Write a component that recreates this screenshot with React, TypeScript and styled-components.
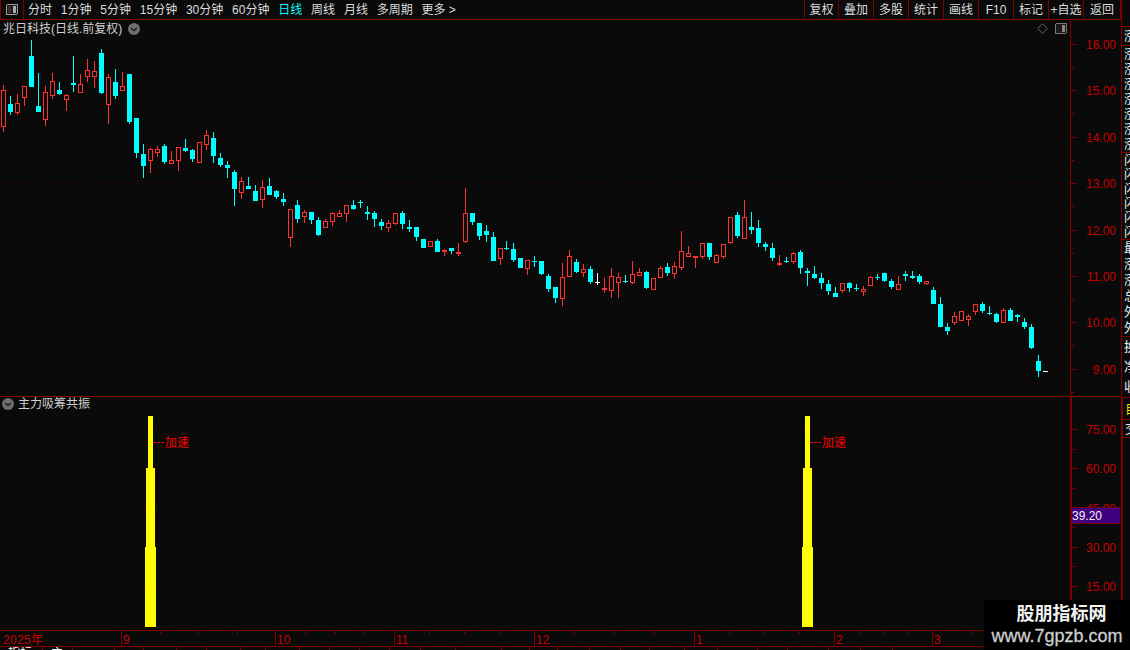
import React from "react";
import styled, { createGlobalStyle } from "styled-components";

const RED_LINE = "#800000";
const AXIS_TEXT = "#c80000";
const FONT = `"Liberation Sans", "Noto Sans CJK SC", sans-serif`;

const Global = createGlobalStyle`
  html, body { margin: 0; padding: 0; background: #0a0a0a; overflow: hidden; }
`;

const Page = styled.div`
  position: relative;
  display: flex;
  width: 1130px;
  height: 650px;
  overflow: hidden;
  background: #0a0a0a;
  color: #ddd;
  font: 12px/1 ${FONT};
`;

const MainColumn = styled.div`
  display: flex;
  flex-direction: column;
  width: 1121px;
  flex: none;
`;

const Toolbar = styled.div`
  display: flex;
  align-items: center;
  height: 19px;
  border-bottom: 1px solid ${RED_LINE};
  box-sizing: content-box;
  flex: none;
`;

const LayoutCell = styled.div`
  display: flex;
  align-items: center;
  justify-content: center;
  width: 22px;
  height: 19px;
  border-left: 1px solid ${RED_LINE};
  border-right: 1px solid ${RED_LINE};
  margin-right: 4px;
  flex: none;
`;

const Periods = styled.div`
  display: flex;
  align-items: center;
  gap: 8.8px;
  flex: 1;
`;

const Period = styled.span<{ $active?: boolean }>`
  color: ${(p) => (p.$active ? "#00ffff" : "#ddd")};
  white-space: nowrap;
`;

const Actions = styled.div`
  display: flex;
  height: 19px;
  border-right: 1px solid ${RED_LINE};
`;

const Action = styled.div`
  display: flex;
  align-items: center;
  justify-content: center;
  width: 34px;
  border-left: 1px solid ${RED_LINE};
  white-space: nowrap;
  color: #ddd;

  &:first-child {
    width: 33px;
  }

  &:last-child {
    width: 36px;
  }
`;

const Pane = styled.div<{ $h: number }>`
  position: relative;
  height: ${(p) => p.$h}px;
  flex: none;
  border-bottom: 1px solid ${RED_LINE};
`;

const ChartSvg = styled.svg`
  display: block;
  position: absolute;
  inset: 0;
  shape-rendering: crispEdges;
`;

const PaneTitle = styled.div`
  position: absolute;
  display: flex;
  align-items: center;
  gap: 6px;
  color: #d0d0d0;
  white-space: nowrap;
`;

const PriceTitle = styled(PaneTitle)`
  left: 3px;
  top: 3px;
`;

const IndicatorTitle = styled(PaneTitle)`
  left: 2px;
  top: 1px;
  gap: 4px;
`;

const CornerTools = styled.div`
  position: absolute;
  top: 3px;
  left: 1037px;
  display: flex;
  align-items: center;
  gap: 7px;
`;

const BottomTabs = styled.div`
  display: flex;
  height: 3px;
  overflow: hidden;
  flex: 1;
`;

const BottomTab = styled.div<{ $w: number; $cyan?: boolean }>`
  width: ${(p) => p.$w}px;
  flex: none;
  box-sizing: border-box;
  border-right: 1px solid ${RED_LINE};
  padding-left: 8px;
  color: ${(p) => (p.$cyan ? "#00ffff" : "#fff")};
  line-height: 12px;
  white-space: nowrap;
  overflow: hidden;
`;

const SideColumn = styled.div`
  display: flex;
  flex-direction: column;
  width: 9px;
  height: 650px;
  flex: none;
  overflow: hidden;
`;

const SideBlank = styled.div<{ $h: number; $wide?: boolean }>`
  height: ${(p) => p.$h}px;
  flex: none;
  box-sizing: border-box;
  border-left: ${(p) => (p.$wide ? 2 : 1)}px solid ${RED_LINE};
`;

const SideGroup = styled.div<{ $h: number; $wide?: boolean }>`
  display: flex;
  flex-direction: column;
  justify-content: space-around;
  height: ${(p) => p.$h}px;
  flex: none;
  box-sizing: border-box;
  border-top: 1px solid ${RED_LINE};
  border-left: ${(p) => (p.$wide ? 2 : 1)}px solid ${RED_LINE};
  overflow: hidden;
`;

const SideGlyph = styled.span<{ $yellow?: boolean }>`
  display: block;
  padding-left: 2px;
  width: 14px;
  font-size: 13px;
  line-height: 14px;
  color: ${(p) => (p.$yellow ? "#e0e000" : "#e8e8e8")};
`;

const Watermark = styled.div`
  position: absolute;
  left: 984px;
  top: 600px;
  width: 146px;
  height: 50px;
  background: #000;
  display: flex;
  flex-direction: column;
  align-items: center;
  padding-top: 5px;
  box-sizing: border-box;
`;

const WatermarkName = styled.div`
  font: bold 18px/19px ${FONT};
  color: #f2f2f2;
  margin-left: 9px;
`;

const WatermarkUrl = styled.div`
  font: 18px/20px "Liberation Sans", sans-serif;
  color: #cfcfcf;
  margin-top: 2px;
  -webkit-text-stroke: 0.3px #cfcfcf;
`;

const AxisLabel = styled.text`
  font: 12px ${FONT};
  fill: ${AXIS_TEXT};
  shape-rendering: auto;
`;

const SignalLabel = styled.text`
  font: 12px ${FONT};
  fill: #ff0000;
`;

const BadgeText = styled.text`
  font: 12px ${FONT};
  fill: #f0f0f0;
`;

type Candle = [string, number, number, number, number];

const candles: Candle[] = [
  ["r",85,90,127,132],["c",96,104,112,115],["r",94,103,113,115],["r",86,86,98,106],["c",40,56,87,87],
  ["c",73,106,112,112],["r",86,92,120,126],["r",73,81,96,99],["c",82,90,94,95],["r",94,95,100,111],
  ["c",56,83,85,92],["r",74,84,93,93],["r",59,70,77,82],["r",61,71,77,88],["c",49,53,93,94],
  ["r",74,77,105,124],["c",69,82,96,99],["r",72,86,91,91],["c",74,74,122,124],["c",118,118,153,158],
  ["c",144,154,166,178],["r",148,149,161,173],["r",146,149,153,157],["c",144,146,162,164],["r",151,160,164,164],
  ["r",147,147,161,171],["c",139,148,151,152],["c",149,150,159,162],["r",142,142,163,163],["r",130,135,145,150],
  ["c",132,138,156,163],["c",153,158,165,167],["c",161,165,168,178],["c",170,172,189,206],["r",177,181,193,199],
  ["c",177,186,189,189],["c",185,191,201,201],["r",180,187,200,208],["c",178,186,195,195],["c",190,191,197,199],
  ["c",193,199,202,206],["r",209,209,238,247],["c",200,205,219,223],["r",210,212,217,223],["c",212,212,220,224],
  ["c",217,220,235,236],["r",219,221,228,228],["r",212,213,222,226],["r",210,213,217,217],["r",205,205,214,222],
  ["c",200,205,209,210],["c",200,202,203,208],["c",206,212,214,220],["c",211,213,219,227],["c",219,222,226,230],
  ["r",220,223,228,232],["r",213,213,224,225],["c",211,213,224,229],["c",220,227,229,232],["c",227,227,237,241],
  ["c",239,239,248,248],["r",241,241,247,247],["c",239,241,252,252],["r",249,250,252,256],["c",248,248,251,254],
  ["r",243,252,254,256],["r",188,213,242,243],["c",213,213,222,225],["c",223,223,236,240],["c",225,231,235,242],
  ["c",232,237,261,261],["r",248,248,259,265],["c",241,248,249,250],["c",243,249,260,262],["c",258,258,268,268],
  ["r",260,260,269,275],["c",256,261,262,267],["c",261,261,274,275],["c",274,276,289,292],["c",287,287,298,303],
  ["r",263,277,299,306],["r",250,256,277,277],["c",259,262,272,273],["r",264,269,273,277],["c",266,269,282,284],
  ["w",273,282,283,285],["r",278,288,290,293],["r",268,276,291,298],["r",273,277,283,298],["c",275,281,282,283],
  ["r",261,274,283,284],["r",268,272,276,276],["c",271,272,288,289],["r",278,278,290,290],["r",266,268,278,278],
  ["c",263,267,273,276],["r",262,266,274,279],["r",231,251,268,270],["r",246,253,257,257],["r",256,256,258,268],
  ["r",243,243,257,259],["c",243,243,257,260],["r",254,255,263,263],["r",244,244,257,259],["r",217,217,243,244],
  ["c",212,215,236,238],["r",200,217,239,239],["c",212,227,230,234],["c",220,228,243,247],["c",242,244,247,251],
  ["c",243,248,258,261],["r",255,263,265,266],["c",257,261,262,263],["r",252,253,262,264],["c",250,252,268,274],
  ["c",268,271,273,286],["c",266,274,278,279],["c",273,278,283,289],["c",280,284,291,295],["c",287,293,297,297],
  ["r",283,283,291,293],["c",282,283,288,292],["c",284,288,289,291],["r",286,289,292,296],["r",276,277,286,286],
  ["c",274,277,278,280],["c",273,273,281,282],["c",279,281,287,289],["r",276,284,290,290],["c",271,274,276,281],
  ["c",271,276,278,279],["c",274,276,282,284],["r",281,281,284,285],["c",287,290,304,304],["c",297,304,327,327],
  ["c",323,327,331,335],["r",312,316,323,325],["r",311,311,321,321],["r",314,316,320,326],["r",304,304,312,315],
  ["c",302,304,311,313],["c",306,313,314,315],["c",313,314,322,323],["r",308,310,323,323],["c",308,310,321,321],
  ["c",314,315,317,322],["c",318,322,327,329],["c",324,327,348,349],["c",355,361,371,377],["w",371,371,372,372],
];

const colorOf: Record<string, string> = { c: "#00ffff", r: "#ff3232", w: "#ffffff" };

const CandleMark: React.FC<{ candle: Candle; index: number; dy: number }> = ({ candle, index, dy }) => {
  const [kind, high, top, bottom, low] = candle;
  const x = Math.round(1 + index * 6.993);
  const color = colorOf[kind];
  const h = high - dy;
  const t = top - dy;
  const b = bottom - dy;
  const l = low - dy;
  const hollow = kind === "r" && b - t > 2;
  return (
    <g>
      {h < t && <rect x={x + 2} y={h} width={1} height={t - h} fill={color} />}
      {l > b && <rect x={x + 2} y={b} width={1} height={l - b} fill={color} />}
      {hollow ? (
        <rect x={x + 0.5} y={t + 0.5} width={4} height={b - t - 1} fill="#0a0a0a" stroke={color} strokeWidth={1} />
      ) : (
        <rect x={x} y={t} width={5} height={Math.max(1, b - t)} fill={color} />
      )}
    </g>
  );
};

const GridRow: React.FC<{ y: number; label: string; lineX: number }> = ({ y, label, lineX }) => (
  <g>
    <line x1={0} x2={lineX} y1={y + 0.5} y2={y + 0.5} stroke="#5c0000" strokeWidth={1} strokeDasharray="1 5" />
    <rect x={lineX} y={y} width={6} height={1} fill={RED_LINE} />
    <AxisLabel x={1116} y={y + 5} textAnchor="end">{label}</AxisLabel>
  </g>
);

const priceRows: [number, string][] = [
  [44, "16.00"],[90, "15.00"],[137, "14.00"],[183, "13.00"],[230, "12.00"],[276, "11.00"],[322, "10.00"],[369, "9.00"],
];
const priceMinor = [67, 113, 160, 206, 253, 299, 345, 392];

const PriceChart = () => (
  <ChartSvg width={1121} height={376} viewBox="0 0 1121 376">
    {priceRows.map(([y, label]) => (
      <GridRow key={label} y={y - 20} label={label} lineX={1071} />
    ))}
    {priceMinor.map((y) => (
      <rect key={y} x={1071} y={y - 20} width={3} height={1} fill={RED_LINE} />
    ))}
    {candles.map((c, i) => (
      <CandleMark key={i} candle={c} index={i} dy={20} />
    ))}
    <rect x={1070} y={0} width={1} height={376} fill={RED_LINE} />
  </ChartSvg>
);

const indicatorRows: [number, string][] = [
  [429, "75.00"],[468, "60.00"],[508, "45.00"],[547, "30.00"],[586, "15.00"],
];
const indicatorMinor = [449, 488, 527, 566];

const SignalBar: React.FC<{ x: number }> = ({ x }) => (
  <g fill="#ffff00">
    <rect x={x + 3} y={416 - 397} width={5} height={52} />
    <rect x={x + 1} y={468 - 397} width={9} height={79} />
    <rect x={x} y={547 - 397} width={11} height={80} />
    <line x1={x + 8} x2={x + 19} y1={442.5 - 397} y2={442.5 - 397} stroke="#ff0000" strokeDasharray="3 1" />
    <SignalLabel x={x + 20} y={447 - 397}>加速</SignalLabel>
  </g>
);

const IndicatorChart = () => (
  <ChartSvg width={1121} height={233} viewBox="0 0 1121 233">
    {indicatorRows.map(([y, label]) => (
      <GridRow key={label} y={y - 397} label={label} lineX={1072} />
    ))}
    {indicatorMinor.map((y) => (
      <rect key={y} x={1072} y={y - 397} width={3} height={1} fill={RED_LINE} />
    ))}
    <SignalBar x={145} />
    <SignalBar x={802} />
    <rect x={1072} y={507 - 397} width={48} height={17} fill={RED_LINE} />
    <rect x={1072} y={508 - 397} width={48} height={15} fill="#3f0080" />
    <BadgeText x={1072} y={520 - 397}>39.20</BadgeText>
    <rect x={1070} y={0} width={2} height={233} fill={RED_LINE} />
  </ChartSvg>
);

const majorTicks: [number, string][] = [
  [121, "9"],[275, "10"],[394, "11"],[534, "12"],[694, "1"],[834, "2"],[932, "3"],
];
const minorTicks = [160, 198, 237, 305, 335, 364, 429, 464, 499, 574, 614, 654, 729, 764, 799, 859, 883, 908, 971, 1010];

const TimeChart = () => (
  <ChartSvg width={1121} height={15} viewBox="0 0 1121 15">
    <AxisLabel x={3} y={13} letterSpacing={0.3}>2025年</AxisLabel>
    {majorTicks.map(([x, label]) => (
      <g key={x}>
        <rect x={x} y={0} width={1} height={15} fill={RED_LINE} />
        <AxisLabel x={x + 2} y={13}>{label}</AxisLabel>
      </g>
    ))}
    {minorTicks.map((x) => (
      <rect key={x} x={x} y={0} width={1} height={3} fill={RED_LINE} />
    ))}
  </ChartSvg>
);

const CollapseIcon = () => (
  <svg width="12" height="12" viewBox="0 0 12 12">
    <circle cx="6" cy="6" r="6" fill="#6e6e6e" />
    <path d="M3 5l3 2.6L9 5" fill="none" stroke="#1a1a1a" strokeWidth="1.3" />
  </svg>
);

const DiamondIcon = () => (
  <svg width="11" height="11" viewBox="0 0 11 11">
    <path d="M5.5.7l4.8 4.8-4.8 4.8L.7 5.5z" fill="none" stroke="#666" />
  </svg>
);

const SplitIcon: React.FC<{ side: "left" | "right"; stroke: string }> = ({ side, stroke }) => (
  <svg width="12" height="11" viewBox="0 0 12 11" shapeRendering="crispEdges">
    <rect x=".5" y=".5" width="11" height="10" rx="1.5" fill="#1a1a1a" stroke={stroke} />
    <rect x={side === "left" ? 2 : 7} y="2" width="3" height="7" fill={side === "left" ? "#333" : "#888"} />
    {side === "left" && <rect x="7" y="2" width="3" height="7" fill="#aaa" />}
  </svg>
);

const periods = ["分时", "1分钟", "5分钟", "15分钟", "30分钟", "60分钟", "日线", "周线", "月线", "多周期", "更多 >"];
const actions = ["复权", "叠加", "多股", "统计", "画线", "F10", "标记", "+自选", "返回"];
const tabWidths = [43, 30, 42, 29, 33, 30, 34, 25, 34, 30, 30, 30, 31, 35, 46, 28, 28, 32, 31, 29, 35, 33, 40, 30, 41, 32, 32];
const tabTexts = ["指标", "主", "", "", "", "", "", "", "", "", "", "", "", "", "", "", "", "", "", "", "", "", "", "", "", "", ""];
const sideGroups: { h: number; glyphs: string[]; wide?: boolean; yellow?: boolean }[] = [
  { h: 19, glyphs: ["涨"] },
  { h: 107, glyphs: ["涨", "涨", "涨", "涨", "涨", "涨", "涨"] },
  { h: 87, glyphs: ["闪", "闪", "闪", "闪", "闪", "闪"] },
  { h: 97, glyphs: ["最", "涨", "涨", "总", "外", "外"] },
  { h: 61, glyphs: ["换", "净", "收"] },
  { h: 22, glyphs: ["自"], wide: true, yellow: true },
  { h: 18, glyphs: ["交"], wide: true },
  { h: 213, glyphs: [], wide: true },
];

export default function App() {
  return (
    <Page>
      <Global />
      <MainColumn>
        <Toolbar>
          <LayoutCell>
            <SplitIcon side="left" stroke="#999" />
          </LayoutCell>
          <Periods>
            {periods.map((p) => (
              <Period key={p} $active={p === "日线"}>{p}</Period>
            ))}
          </Periods>
          <Actions>
            {actions.map((a) => (
              <Action key={a}>{a}</Action>
            ))}
          </Actions>
        </Toolbar>
        <Pane $h={376}>
          <PriceChart />
          <PriceTitle>
            <span>兆日科技(日线.前复权)</span>
            <CollapseIcon />
          </PriceTitle>
          <CornerTools>
            <DiamondIcon />
            <SplitIcon side="right" stroke="#777" />
          </CornerTools>
        </Pane>
        <Pane $h={233}>
          <IndicatorChart />
          <IndicatorTitle>
            <CollapseIcon />
            <span>主力吸筹共振</span>
          </IndicatorTitle>
        </Pane>
        <Pane $h={15}>
          <TimeChart />
        </Pane>
        <BottomTabs>
          {tabWidths.map((w, i) => (
            <BottomTab key={i} $w={w} $cyan={i === 20}>{tabTexts[i]}</BottomTab>
          ))}
        </BottomTabs>
      </MainColumn>
      <SideColumn>
        <SideBlank $h={26} />
        {sideGroups.map((g, i) => (
          <SideGroup key={i} $h={g.h} $wide={g.wide}>
            {g.glyphs.map((t, j) => (
              <SideGlyph key={j} $yellow={g.yellow}>{t}</SideGlyph>
            ))}
          </SideGroup>
        ))}
      </SideColumn>
      <Watermark>
        <WatermarkName>股朋指标网</WatermarkName>
        <WatermarkUrl>www.7gpzb.com</WatermarkUrl>
      </Watermark>
    </Page>
  );
}
